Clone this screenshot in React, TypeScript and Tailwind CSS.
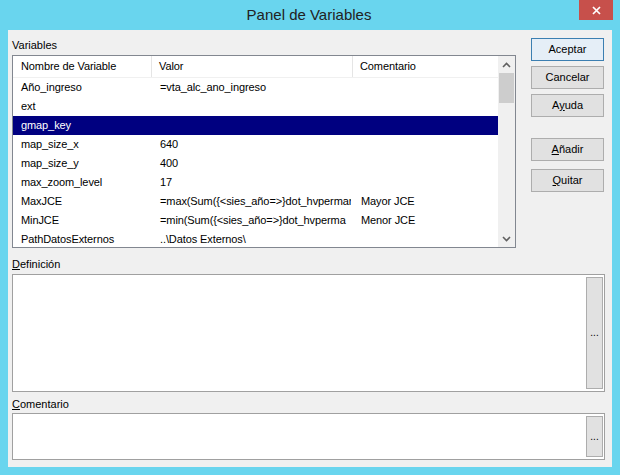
import React from 'react';

interface VarRow {
  name: string;
  value?: string;
  comment?: string;
}

const rows: VarRow[] = [
  { name: 'Año_ingreso', value: '=vta_alc_ano_ingreso' },
  { name: 'ext' },
  { name: 'gmap_key' },
  { name: 'map_size_x', value: '640' },
  { name: 'map_size_y', value: '400' },
  { name: 'max_zoom_level', value: '17' },
  { name: 'MaxJCE', value: '=max(Sum({<sies_año=>}dot_hvperman', comment: 'Mayor JCE' },
  { name: 'MinJCE', value: '=min(Sum({<sies_año=>}dot_hvperma', comment: 'Menor JCE' },
  { name: 'PathDatosExternos', value: '..\\Datos Externos\\' }
];

const SELECTED = 2;

// Win8 style push button
const DlgButton: React.FC<{ children: React.ReactNode; primary?: boolean }> = ({ children, primary }) => (
  <button
    className={
      'w-[73px] h-[23px] flex items-center justify-center text-[11px] text-black border ' +
      (primary ? 'border-[#3c7fb1] bg-[#e5eef7]' : 'border-[#adadad] bg-[#e1e1e1]')
    }
  >
    {children}
  </button>
);

const Chevron: React.FC<{ up?: boolean }> = ({ up }) => (
  <svg width="9" height="6" viewBox="0 0 9 6">
    <polyline
      points={up ? '1,5 4.5,1.5 8,5' : '1,1 4.5,4.5 8,1'}
      fill="none"
      stroke="#606060"
      strokeWidth="1.6"
    />
  </svg>
);

const EllipsisButton: React.FC = () => (
  <div className="w-[17px] h-full bg-[#e1e1e1] border border-[#adadad] flex items-center justify-center text-[10px] text-black leading-none">
    ...
  </div>
);

export default function App() {
  return (
    <div
      className="w-[620px] h-[475px] bg-[#69d5ee] flex flex-col overflow-hidden"
      style={{ fontFamily: '"Liberation Sans", Arial, sans-serif' }}
    >
      {/* Title bar */}
      <div className="h-[30px] flex items-start shrink-0">
        <div className="w-[39px]" />
        <div className="flex-1 h-[31px] flex items-center justify-center text-[15px] text-[#222]">
          Panel de Variables
        </div>
        <div className="w-[34px] h-[20px] mr-[7px] bg-[#c7504b] flex items-center justify-center">
          <svg width="9" height="9" viewBox="0 0 9 9">
            <path d="M1 1 L8 8 M8 1 L1 8" stroke="white" strokeWidth="1.7" />
          </svg>
        </div>
      </div>

      {/* Client area */}
      <div className="flex-1 mx-[8px] mb-[8px] bg-[#f0f0f0] pl-[4px] pt-[8px] text-[11px] text-black flex flex-col">
        <div className="flex">
          <div className="w-[504px] flex flex-col">
            <div className="h-[17px] leading-[14px]">Variables</div>
            <div className="h-[193px] border border-[#828790] bg-white flex overflow-hidden tracking-[-0.1px]">
              <div className="flex-1 flex flex-col overflow-hidden">
                <div className="h-[22px] shrink-0 flex border-b border-[#f0f0f0]">
                  <div className="w-[139px] pl-[8px] flex items-center border-r border-[#e5e5e5]">Nombre de Variable</div>
                  <div className="w-[201px] pl-[7px] flex items-center border-r border-[#e5e5e5]">Valor</div>
                  <div className="flex-1 pl-[7px] flex items-center">Comentario</div>
                </div>
                {rows.map((r, i) => (
                  <div
                    key={r.name}
                    className={'h-[19px] shrink-0 flex items-center ' + (i === SELECTED ? 'bg-[#000080] text-white' : '')}
                  >
                    <div className="w-[139px] pl-[8px] whitespace-nowrap overflow-hidden">{r.name}</div>
                    <div className="w-[199px] pl-[8px] mr-[2px] whitespace-nowrap overflow-hidden">{r.value}</div>
                    <div className="flex-1 pl-[8px] whitespace-nowrap overflow-hidden">{r.comment}</div>
                  </div>
                ))}
              </div>
              {/* Scrollbar */}
              <div className="w-[17px] bg-[#f0f0f0] flex flex-col shrink-0">
                <div className="h-[17px] flex items-center justify-center">
                  <Chevron up />
                </div>
                <div className="h-[30px] mx-[1px] bg-[#cdcdcd]" />
                <div className="flex-1" />
                <div className="h-[17px] flex items-center justify-center">
                  <Chevron />
                </div>
              </div>
            </div>
          </div>

          {/* Buttons */}
          <div className="ml-[15px] flex flex-col">
            <DlgButton primary>Aceptar</DlgButton>
            <div className="h-[5px]" />
            <DlgButton>Cancelar</DlgButton>
            <div className="h-[5px]" />
            <DlgButton>
              A<span className="underline">y</span>uda
            </DlgButton>
            <div className="h-[21px]" />
            <DlgButton>
              <span className="underline">A</span>ñadir
            </DlgButton>
            <div className="h-[8px]" />
            <DlgButton>
              <span className="underline">Q</span>uitar
            </DlgButton>
          </div>
        </div>

        {/* Definición */}
        <div className="h-[26px] pt-[9px] leading-[14px]">
          <span className="underline">D</span>efinición
        </div>
        <div className="w-[593px] h-[118px] border border-[#a0a0a0] bg-white flex justify-end py-[2px] pr-[1px]">
          <EllipsisButton />
        </div>

        {/* Comentario */}
        <div className="h-[21px] pt-[5px] leading-[14px]">
          <span className="underline">C</span>omentario
        </div>
        <div className="w-[593px] h-[47px] border border-[#a0a0a0] bg-white flex justify-end py-[2px] pr-[1px]">
          <EllipsisButton />
        </div>
      </div>
    </div>
  );
}
